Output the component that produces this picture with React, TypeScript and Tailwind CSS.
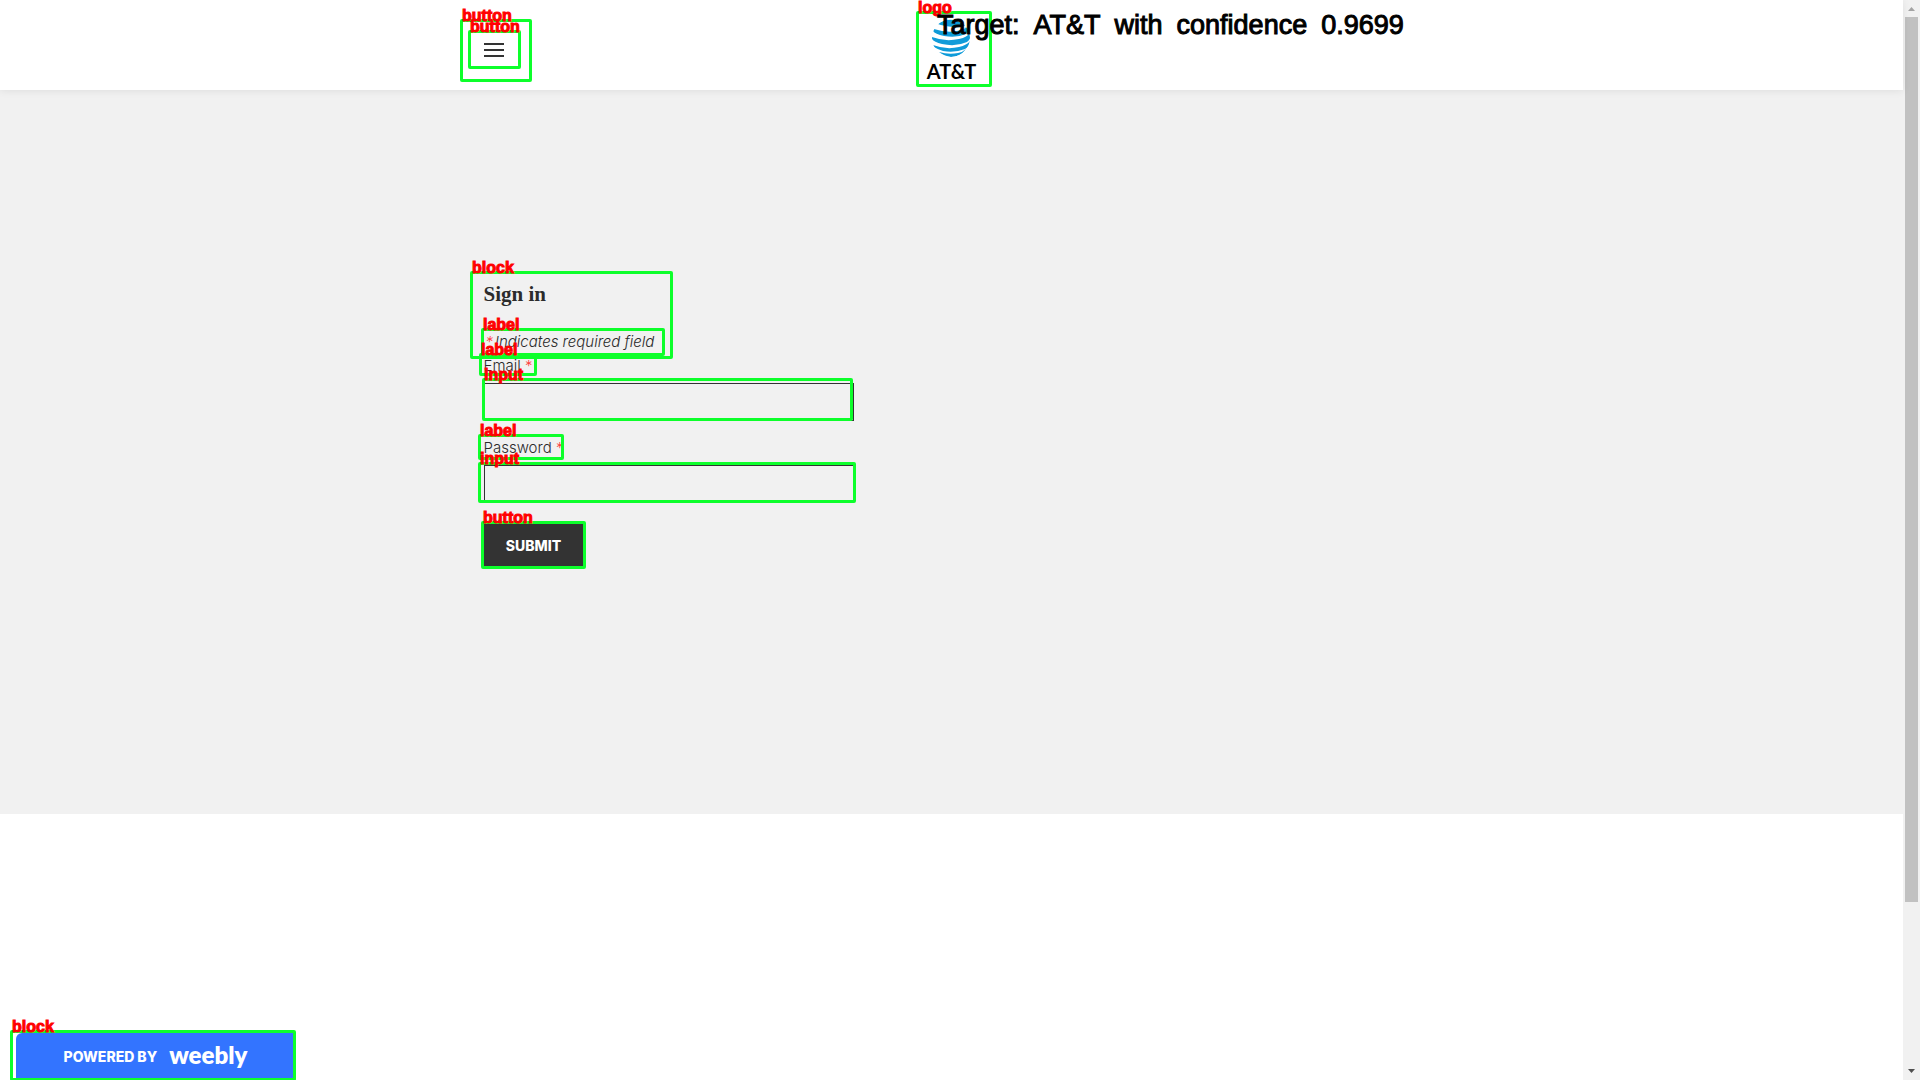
import React from "react";

type Box = { label: string; frame: string };

const boxes: Box[] = [
  { label: "button", frame: "left-[460px] top-[19px] w-[72px] h-[63px]" },
  { label: "button", frame: "left-[468px] top-[30px] w-[53px] h-[39px]" },
  { label: "logo", frame: "left-[916px] top-[11px] w-[76px] h-[76px]" },
  { label: "block", frame: "left-[470px] top-[271px] w-[203px] h-[88px]" },
  { label: "label", frame: "left-[481px] top-[328px] w-[184px] h-[28px]" },
  { label: "label", frame: "left-[479px] top-[353px] w-[58px] h-[23px]" },
  { label: "input", frame: "left-[482px] top-[378px] w-[371px] h-[43px]" },
  { label: "label", frame: "left-[478px] top-[434px] w-[86px] h-[26px]" },
  { label: "input", frame: "left-[478px] top-[462px] w-[378px] h-[41px]" },
  { label: "button", frame: "left-[481px] top-[521px] w-[105px] h-[48px]" },
  { label: "block", frame: "left-[10px] top-[1030px] w-[286px] h-[51px]" },
];

const caption = ["Target:", "AT&T", "with", "confidence", "0.9699"];

function Annotation({ label, frame }: Box) {
  return (
    <div className={`absolute rounded-[2px] border-3 border-[#0dff2b] ${frame}`}>
      <span className="absolute -top-[14px] -left-[1px] font-['Liberation_Sans',sans-serif] text-[16px] leading-4 font-bold text-[#ff0000] [-webkit-text-stroke:1px_#ff0000]">
        {label}
      </span>
    </div>
  );
}

function Globe() {
  return (
    <svg viewBox="0 0 38 38" className="h-[38px] w-[38px]" aria-hidden="true">
      <defs>
        <clipPath id="globe">
          <circle cx="19" cy="19" r="19" />
        </clipPath>
      </defs>
      <g clipPath="url(#globe)" fill="#0f9bd9">
        <path d="M6 5Q18-4 33 6Q31 9 22 8Q11 7 6 5Z" />
        <path d="M2 10Q14 14 25 12Q34 10 34 8Q38 12 34 15Q25 19 12 17Q3 15 1 12Z" />
        <path d="M0 18Q13 23 27 20Q36 18 37 14Q40 20 35 23Q24 28 10 25Q2 23 0 20Z" />
        <path d="M1 26Q14 31 27 28Q35 26 38 22Q37 28 33 30Q23 34 11 32Q5 30 2 28Z" />
        <path d="M7 33Q17 36 26 34Q31 33 34 30Q28 38 19 38Q12 37 7 33Z" />
      </g>
    </svg>
  );
}

function Field({ id, label, type }: { id: string; label: string; type: string }) {
  return (
    <div className="flex flex-col gap-[5px]">
      <label htmlFor={id} className="text-[15px] leading-6 font-light">
        {label} <span className="text-[#ff3b3b]">*</span>
      </label>
      <input
        id={id}
        type={type}
        className="h-[38px] w-full border border-[#333333] bg-transparent px-3 text-[15px] outline-none"
      />
    </div>
  );
}

export default function App() {
  return (
    <div className="relative flex min-h-screen overflow-hidden bg-white font-['Inter',sans-serif] text-[#2b2b2b]">
      <div className="flex min-w-0 flex-1 flex-col">
        <header className="z-10 bg-white shadow-[0_1px_8px_rgba(0,0,0,0.08)]">
          <div className="mx-auto grid h-[90px] max-w-[936px] grid-cols-3 items-center">
            <button type="button" aria-label="Menu" className="mt-2.5 flex w-5 flex-col gap-1">
              <span className="h-0.5 bg-[#333333]" />
              <span className="h-0.5 bg-[#333333]" />
              <span className="h-0.5 bg-[#333333]" />
            </button>
            <a href="#home" className="mt-3 flex flex-col items-center gap-[2px] justify-self-center text-black">
              <Globe />
              <span className="font-['Lato',sans-serif] text-[20px] leading-6 font-bold">AT&amp;T</span>
            </a>
          </div>
        </header>

        <main className="bg-[#f1f1f1] pt-[189px] pb-[248px]">
          <div className="mx-auto max-w-[936px]">
            <form className="w-[370px]" onSubmit={(e) => e.preventDefault()}>
              <h2 className="mb-[21px] font-['Liberation_Serif',serif] text-[21px] leading-[30px] font-bold">Sign in</h2>
              <p className="flex gap-0.5 pl-0.5 text-[15px] leading-6 font-light italic">
                <span className="text-[#ff3b3b]">*</span>
                <span>Indicates required field</span>
              </p>
              <div className="flex flex-col gap-[15px]">
                <Field id="email" label="Email" type="text" />
                <Field id="password" label="Password" type="password" />
              </div>
              <button
                type="submit"
                className="mt-[21px] block h-[42px] w-[100px] bg-[#333333] text-[14px] font-extrabold text-white"
              >
                SUBMIT
              </button>
            </form>
          </div>
        </main>

        <footer className="mt-auto flex pl-4">
          <a
            href="#weebly"
            className="flex h-[47px] w-[279px] items-center justify-center gap-3 rounded-tl-md bg-[#3374ff] text-white"
          >
            <span className="text-[14px] font-extrabold">POWERED BY</span>
            <span className="mb-1 font-['Lato',sans-serif] text-[24px] leading-7 font-extrabold">weebly</span>
          </a>
        </footer>
      </div>

      <div className="flex w-[17px] flex-col items-center bg-[#f1f1f1]" aria-hidden="true">
        <svg viewBox="0 0 17 17" className="h-[17px] w-[17px]">
          <path d="M5 11L8.500 7L12 11Z" fill="#a3a3a3" />
        </svg>
        <div className="w-[13px] flex-[885] bg-[#c1c1c1]" />
        <div className="flex-[161]" />
        <svg viewBox="0 0 17 17" className="h-[17px] w-[17px]">
          <path d="M5 6L8.500 10L12 6Z" fill="#505050" />
        </svg>
      </div>

      <div className="pointer-events-none absolute inset-0 z-20 overflow-hidden">
        {boxes.map((box, i) => (
          <Annotation key={i} {...box} />
        ))}
        <p className="absolute top-[9px] left-[937px] flex gap-3.5 font-['Liberation_Sans',sans-serif] text-[27px] leading-8 whitespace-nowrap text-black [-webkit-text-stroke:1px_black]">
          {caption.map((word) => (
            <span key={word}>{word}</span>
          ))}
        </p>
      </div>
    </div>
  );
}
